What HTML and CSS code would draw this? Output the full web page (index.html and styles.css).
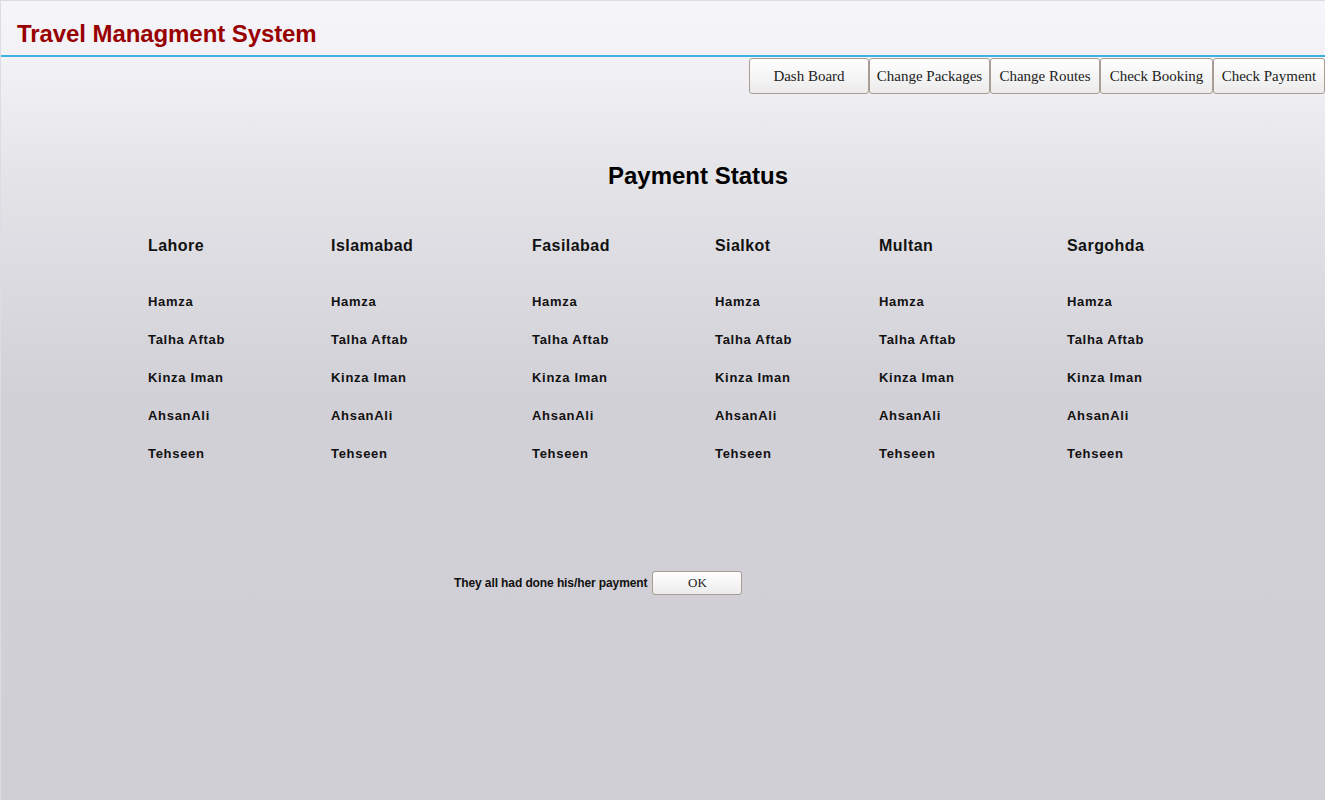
FILE: index.html
```html
<!DOCTYPE html>
<html>
<head>
<meta charset="utf-8">
<title>Travel Managment System</title>
<link rel="stylesheet" href="styles.css">
</head>
<body>
<div class="page">
  <header class="header">
    <h1 class="brand">Travel Managment System</h1>
  </header>
  <nav class="nav">
    <button class="nav-btn btn-dash">Dash Board</button>
    <button class="nav-btn btn-packages">Change Packages</button>
    <button class="nav-btn btn-routes">Change Routes</button>
    <button class="nav-btn btn-booking">Check Booking</button>
    <button class="nav-btn btn-payment">Check Payment</button>
  </nav>
  <main class="content">
    <h2 class="title">Payment Status</h2>
    <div class="grid">
      <div class="city">Lahore</div>
      <div class="city">Islamabad</div>
      <div class="city">Fasilabad</div>
      <div class="city">Sialkot</div>
      <div class="city">Multan</div>
      <div class="city">Sargohda</div>

      <div class="name">Hamza</div><div class="name">Hamza</div><div class="name">Hamza</div><div class="name">Hamza</div><div class="name">Hamza</div><div class="name">Hamza</div>
      <div class="name">Talha Aftab</div><div class="name">Talha Aftab</div><div class="name">Talha Aftab</div><div class="name">Talha Aftab</div><div class="name">Talha Aftab</div><div class="name">Talha Aftab</div>
      <div class="name">Kinza Iman</div><div class="name">Kinza Iman</div><div class="name">Kinza Iman</div><div class="name">Kinza Iman</div><div class="name">Kinza Iman</div><div class="name">Kinza Iman</div>
      <div class="name">AhsanAli</div><div class="name">AhsanAli</div><div class="name">AhsanAli</div><div class="name">AhsanAli</div><div class="name">AhsanAli</div><div class="name">AhsanAli</div>
      <div class="name">Tehseen</div><div class="name">Tehseen</div><div class="name">Tehseen</div><div class="name">Tehseen</div><div class="name">Tehseen</div><div class="name">Tehseen</div>
    </div>
    <div class="confirm">
      <span class="confirm-text">They all had done his/her payment</span>
      <button class="ok-btn">OK</button>
    </div>
  </main>
</div>
</body>
</html>
```

FILE: styles.css
```css
html, body {
  margin: 0;
  padding: 0;
}

body {
  font-family: "Liberation Sans", Arial, sans-serif;
  background: #d0cfd5;
}

.page {
  box-sizing: border-box;
  width: 1325px;
  height: 800px;
  border-top: 1px solid #dcdce2;
  border-left: 1px solid #dcdce2;
  background: linear-gradient(to bottom, #f5f5fa 0px, #f1f1f6 60px, #e4e3e8 180px, #d1d0d6 400px, #d0cfd5 800px);
  overflow: hidden;
}

.header {
  height: 54px;
  border-bottom: 2px solid #3cb4e2;
  display: flex;
  align-items: flex-end;
}

.brand {
  margin: 0 0 7px 16px;
  font-size: 24px;
  font-weight: bold;
  line-height: 28px;
  letter-spacing: -0.08px;
  color: #990000;
}

.nav {
  display: flex;
  justify-content: flex-end;
  margin-top: 1px;
}

.nav-btn {
  box-sizing: border-box;
  height: 36px;
  padding: 0;
  font-family: "Liberation Serif", "Times New Roman", serif;
  font-size: 15px;
  color: #222;
  background: linear-gradient(to bottom, #ffffff, #ebebeb);
  border: 1px solid #a79d92;
  border-radius: 3px;
  text-align: center;
}

.btn-dash { width: 120px; }
.btn-packages { width: 121px; }
.btn-routes { width: 110px; }
.btn-booking { width: 113px; }
.btn-payment { width: 112px; }

.content {
  display: flex;
  flex-direction: column;
}

.title {
  margin: 68px 0 0 70px;
  text-align: center;
  font-size: 24px;
  line-height: 27px;
  font-weight: bold;
  color: #000;
}

.grid {
  display: grid;
  grid-template-columns: 183px 201px 183px 164px 188px auto;
  grid-template-rows: 56px repeat(5, 38px);
  margin: 47px 0 0 147px;
}

.city {
  font-size: 16px;
  font-weight: bold;
  letter-spacing: 0.45px;
  color: #111;
  line-height: 20px;
}

.name {
  font-size: 13px;
  font-weight: bold;
  letter-spacing: 0.7px;
  color: #111;
  line-height: 20px;
}

.confirm {
  display: flex;
  align-items: center;
  gap: 5px;
  margin: 89px 0 0 453px;
}

.confirm-text {
  font-size: 12px;
  font-weight: bold;
  letter-spacing: -0.1px;
  color: #111;
}

.ok-btn {
  box-sizing: border-box;
  width: 90px;
  height: 24px;
  padding: 0;
  font-family: "Liberation Serif", "Times New Roman", serif;
  font-size: 13px;
  color: #222;
  background: linear-gradient(to bottom, #ffffff, #ebebeb);
  border: 1px solid #a79d92;
  border-radius: 3px;
}
```
